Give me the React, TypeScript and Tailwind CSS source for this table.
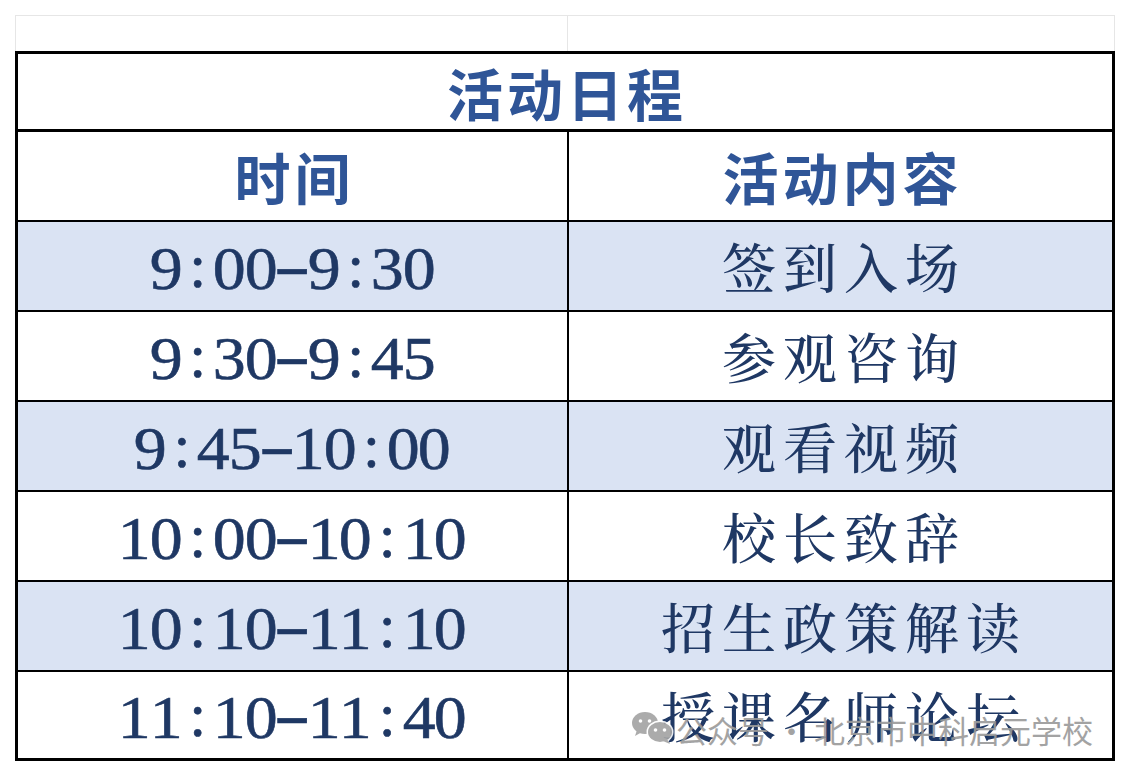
import React from "react";

const rows: { t: string; a: string; shade: boolean }[] = [
  { t: "9:00-9:30", a: "签到入场", shade: true },
  { t: "9:30-9:45", a: "参观咨询", shade: false },
  { t: "9:45-10:00", a: "观看视频", shade: true },
  { t: "10:00-10:10", a: "校长致辞", shade: false },
  { t: "10:10-11:10", a: "招生政策解读", shade: true },
  { t: "11:10-11:40", a: "授课名师论坛", shade: false },
];

function Time({ t }: { t: string }) {
  return (
    <span className="inline-flex text-[61px] leading-none text-[#1f3864] font-['Liberation_Serif',serif] [-webkit-text-stroke:0.6px_#1f3864]">
      {t.split("").map((c, i) => (
        <span key={i} className="inline-block w-[31.6px] text-center">
          {c === "-" ? (
            <span className="inline-block scale-x-[1.8] -translate-y-[3px]">-</span>
          ) : c === ":" ? (
            <span className="inline-block -translate-y-[2px]">:</span>
          ) : (
            <span className="inline-block scale-x-[1.08]">{c}</span>
          )}
        </span>
      ))}
    </span>
  );
}

function WeChat() {
  return (
    <svg width="42" height="34" viewBox="0 0 42 34">
      <ellipse cx="13" cy="12" rx="13" ry="11" fill="#a3a3a3" />
      <path d="M5 19 L3 25 L10 21 Z" fill="#a3a3a3" />
      <circle cx="8.5" cy="10" r="1.8" fill="#fff" />
      <circle cx="17.5" cy="10" r="1.8" fill="#fff" />
      <ellipse cx="28" cy="21" rx="13.5" ry="11.5" fill="#fff" />
      <ellipse cx="28" cy="21" rx="12" ry="10" fill="#a3a3a3" />
      <path d="M35 28 L38 33 L31 30 Z" fill="#a3a3a3" />
      <circle cx="23.5" cy="19" r="1.8" fill="#fff" />
      <circle cx="32.5" cy="19" r="1.8" fill="#fff" />
    </svg>
  );
}

export default function App() {
  return (
    <div className="relative w-[1130px] h-[778px] bg-white overflow-hidden">
      <div className="pt-[15px] pl-[15px]">
        <div className="flex w-[1100px] h-[36px] border-t border-l border-r border-[#e6e6e6]">
          <div className="w-[552px] border-r border-[#e6e6e6]" />
        </div>
        <div className="w-[1100px] border-[3px] border-black">
          <div className="flex h-[78px] items-center justify-center border-b-[3px] border-black">
            <span className="pl-[4px] tracking-[4px] text-[56px] leading-none font-bold text-[#2f5597] font-['Noto_Sans_CJK_SC',sans-serif]">
              活动日程
            </span>
          </div>
          <div className="flex h-[90px] border-b-2 border-black">
            <div className="flex w-[551px] items-center justify-center border-r-2 border-black">
              <span className="pl-[4px] tracking-[4px] text-[56px] leading-none font-bold text-[#2f5597] font-['Noto_Sans_CJK_SC',sans-serif]">
                时间
              </span>
            </div>
            <div className="flex flex-1 items-center justify-center">
              <span className="pl-[4px] tracking-[4px] text-[56px] leading-none font-bold text-[#2f5597] font-['Noto_Sans_CJK_SC',sans-serif]">
                活动内容
              </span>
            </div>
          </div>
          {rows.map((r, i) => (
            <div
              key={i}
              className={
                (i === rows.length - 1 ? "h-[86px] " : "h-[90px] border-b-2 border-black ") +
                (r.shade ? "flex bg-[#dae3f3]" : "flex bg-white")
              }
            >
              <div className="flex w-[551px] items-center justify-center border-r-2 border-black pt-[4px]">
                <Time t={r.t} />
              </div>
              <div className="flex flex-1 items-center justify-center">
                <span className="pl-[7px] tracking-[7px] text-[54px] leading-none font-medium text-[#1f3864] font-['Noto_Serif_CJK_SC','Noto_Sans_CJK_SC',serif]">
                  {r.a}
                </span>
              </div>
            </div>
          ))}
        </div>
      </div>
      <div className="absolute left-[632px] top-[710px] flex items-center gap-[2px] opacity-90">
        <WeChat />
        <span className="text-[31px] leading-none text-[#9a9a9a] font-['Noto_Sans_CJK_SC',sans-serif] mt-[4px]">
          公众号 · 北京市中科启元学校
        </span>
      </div>
    </div>
  );
}
